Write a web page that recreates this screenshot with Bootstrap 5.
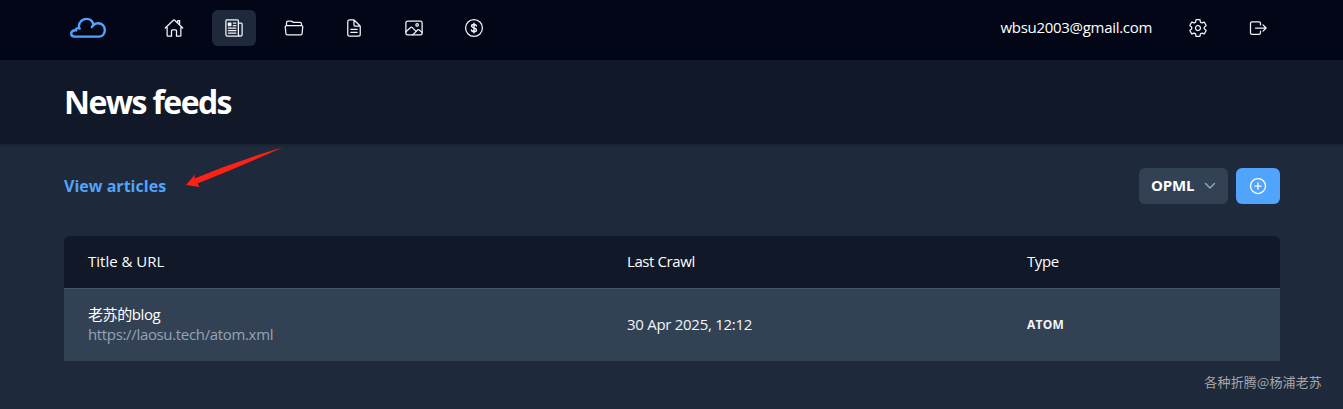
<!DOCTYPE html>
<html lang="en">
<head>
<meta charset="utf-8">
<meta name="viewport" content="width=device-width, initial-scale=1">
<title>News feeds</title>
<link href="https://cdn.jsdelivr.net/npm/bootstrap@5.3.0/dist/css/bootstrap.min.css" rel="stylesheet">
<style>
body{background:#1e293b;color:#fff;font:15px/20px "Open Sans","Noto Sans CJK SC",sans-serif;min-height:409px;overflow:hidden}
.wrap{width:1216px;margin-left:64px}
.topbar{height:60px;background:#020617;padding-bottom:4px}
.ico{width:20px;height:20px;display:block;fill:none;stroke:currentColor;stroke-width:32;stroke-linecap:round;stroke-linejoin:round}
.tab{width:44px;height:36px;border-radius:6px;color:#f1f5f9}
.tab.active{background:#1e293b}
.brand{width:88px;padding-left:5px}
.mail{letter-spacing:-.3px;padding-bottom:2px}
.titlebar{height:84px;background:#111827;box-shadow:0 1px 3px rgba(0,0,0,.25)}
h1{font-size:32px;font-weight:700;line-height:36px;letter-spacing:-1.6px;padding-bottom:1px}
.view{color:#51a4fb;font-size:16px;font-weight:700;letter-spacing:.02px}
.opml{width:89px;height:36px;border-radius:6px;background:#334155;padding:0 12px;font-weight:700;letter-spacing:-.2px}
.opml span{padding-bottom:2px}
.add{width:44px;height:36px;border-radius:6px;background:#51a4fb}
.feeds{border-radius:6px 6px 0 0;overflow:hidden}
.feeds .cell{padding-left:24px}
.c1{width:539px}.c2{width:400px}
.head{height:52px;background:#111827;padding-bottom:2px}
.item{height:73px;background:#334155;border-top:1px solid #475569;padding-bottom:2px}
.name,.t2{letter-spacing:-.4px}
.url{color:#94a3b8;letter-spacing:-.34px}
.date{letter-spacing:-.28px}
.t3{letter-spacing:-.4px}
.soft{color:#f1f5f9}
.kind{font-size:12px;font-weight:700;letter-spacing:.2px}
.arrow{left:184px;top:146px}
.sign{right:21px;bottom:17px;font:13px/20px "Noto Sans CJK SC",sans-serif;color:#a5a9ad;letter-spacing:.15px}
</style>
</head>
<body class="position-relative">
<nav class="topbar d-flex align-items-center">
 <div class="wrap d-flex align-items-center">
  <a class="brand" href="#"><svg class="d-block" width="38" height="22" viewBox="0 0 38 22" fill="none" stroke="#51a4fb" stroke-width="2.4" stroke-linejoin="round" stroke-linecap="round"><path d="M5.500 19.600H29.500C33.700 19.600 35.800 16.500 35.800 12.900C35.800 9 32.900 6.200 29.400 6.200C27.300 6.200 25.800 6.800 24.500 8C23.800 4.400 21 1.900 17.500 1.900C13.500 1.900 10.200 4.700 10 8.800C9.900 9.800 10 10.400 10.100 11.300C8.300 10.800 6.800 11.700 6.400 13.200C3.700 13.200 2.200 14.800 2.200 16.600C2.200 18.300 3.500 19.600 5.500 19.600ZM24.500 8C23.700 8.700 23.200 9.400 22.900 10.200M10.100 11.300L10.800 11.600M6.400 13.200L7.200 13.400"/></svg></a>
  <div class="d-flex gap-3">
   <a class="tab d-flex align-items-center justify-content-center" href="#"><svg class="ico" viewBox="0 0 512 512"><path d="M80 212v236a16 16 0 0016 16h96V328a24 24 0 0124-24h80a24 24 0 0124 24v136h96a16 16 0 0016-16V212M480 256L266.89 52c-5-5.28-16.69-5.34-21.78 0L32 256M400 179V64h-48v69"/></svg></a>
   <a class="tab active d-flex align-items-center justify-content-center" href="#"><svg class="ico" viewBox="0 0 512 512"><path d="M368 415.86V72a24 24 0 00-24-24H72a24 24 0 00-24 24v352a40 40 0 0040 40h328M416 464a48 48 0 01-48-48V128h72a24 24 0 0124 24v264a48 48 0 01-48 48zM240 128h64M240 192h64M112 256h192M112 320h192M112 384h192"/><path fill="currentColor" stroke="none" d="M176 208h-64a16 16 0 01-16-16v-64a16 16 0 0116-16h64a16 16 0 0116 16v64a16 16 0 01-16 16z"/></svg></a>
   <a class="tab d-flex align-items-center justify-content-center" href="#"><svg class="ico" viewBox="0 0 512 512"><path d="M64 192v-72a40 40 0 0140-40h75.89a40 40 0 0122.19 6.72l27.84 18.56a40 40 0 0022.19 6.72H408a40 40 0 0140 40v40M479.9 226.55L463.68 392a40 40 0 01-39.93 40H88.25a40 40 0 01-39.93-40L32.1 226.55A32 32 0 0164 192h384.1a32 32 0 0131.8 34.55z"/></svg></a>
   <a class="tab d-flex align-items-center justify-content-center" href="#"><svg class="ico" viewBox="0 0 512 512"><path d="M416 221.25V416a48 48 0 01-48 48H144a48 48 0 01-48-48V96a48 48 0 0148-48h98.75a32 32 0 0122.62 9.37l141.26 141.26a32 32 0 019.37 22.62zM256 56v120a32 32 0 0032 32h120M176 288h160M176 368h160"/></svg></a>
   <a class="tab d-flex align-items-center justify-content-center" href="#"><svg class="ico" viewBox="0 0 512 512"><rect x="48" y="80" width="416" height="352" rx="48"/><circle cx="336" cy="176" r="32"/><path d="M304 335.79l-90.66-90.49a32 32 0 00-43.87-1.3L48 352M224 432l123.34-123.34a32 32 0 0143.11-2L464 368"/></svg></a>
   <a class="tab d-flex align-items-center justify-content-center" href="#"><svg class="ico" viewBox="0 0 512 512"><circle cx="256" cy="256" r="216"/><path stroke-width="38" d="M318 202c-5-26-29-38-62-38s-62 14-62 43c0 65 126 32 126 98 0 28-26 43-64 43s-62-14-66-42M256 132v248"/></svg></a>
  </div>
  <div class="ms-auto d-flex align-items-center">
   <span class="mail">wbsu2003@gmail.com</span>
   <a class="tab d-flex align-items-center justify-content-center ms-4" href="#"><svg class="ico" viewBox="0 0 512 512"><path d="M262.29 192.31a64 64 0 1057.4 57.4 64.13 64.13 0 00-57.4-57.4zM416.39 256a154.34 154.34 0 01-1.53 20.79l45.21 35.46a10.81 10.81 0 012.45 13.75l-42.77 74a10.81 10.81 0 01-13.14 4.59l-44.9-18.08a16.11 16.11 0 00-15.17 1.75A164.48 164.48 0 01325 400.8a15.94 15.94 0 00-8.82 12.14l-6.73 47.89a11.08 11.08 0 01-10.68 9.17h-85.54a11.11 11.11 0 01-10.69-8.87l-6.72-47.82a16.07 16.07 0 00-9-12.22 155.3 155.3 0 01-21.46-12.57 16 16 0 00-15.11-1.71l-44.89 18.07a10.81 10.81 0 01-13.14-4.58l-42.77-74a10.8 10.8 0 012.45-13.75l38.21-30a16.05 16.05 0 006-14.08c-.36-4.17-.58-8.33-.58-12.5s.21-8.27.58-12.35a16 16 0 00-6.07-13.94l-38.19-30A10.81 10.81 0 0149.48 186l42.77-74a10.81 10.81 0 0113.14-4.59l44.9 18.08a16.11 16.11 0 0015.17-1.75A164.48 164.48 0 01187 111.2a15.94 15.94 0 008.82-12.14l6.73-47.89A11.08 11.08 0 01213.23 42h85.54a11.11 11.11 0 0110.69 8.87l6.72 47.82a16.07 16.07 0 009 12.22 155.3 155.3 0 0121.46 12.57 16 16 0 0015.11 1.71l44.89-18.07a10.81 10.81 0 0113.14 4.58l42.77 74a10.8 10.8 0 01-2.45 13.75l-38.21 30a16.05 16.05 0 00-6.05 14.08c.33 4.14.55 8.3.55 12.47z"/></svg></a>
   <a class="tab d-flex align-items-center justify-content-center ms-3" href="#"><svg class="ico" viewBox="0 0 512 512"><path d="M320 336v40a40 40 0 01-40 40H104a40 40 0 01-40-40V136a40 40 0 0140-40h176a40 40 0 0140 40v40M384 176l80 80-80 80M192 256h264"/></svg></a>
  </div>
 </div>
</nav>
<header class="titlebar d-flex align-items-center"><div class="wrap"><h1 class="m-0">News feeds</h1></div></header>
<main class="wrap pt-4">
 <div class="d-flex align-items-center justify-content-between">
  <a class="view text-decoration-none" href="#"><span>View articles</span></a>
  <div class="d-flex gap-2">
   <div class="opml d-flex align-items-center justify-content-between"><span>OPML</span><svg width="12" height="8" viewBox="0 0 12 8" fill="none" stroke="#94a3b8" stroke-width="1.5" stroke-linecap="round" stroke-linejoin="round"><path d="M1.5 1.5L6 6L10.500 1.500"/></svg></div>
   <div class="add d-flex align-items-center justify-content-center"><svg class="ico" viewBox="0 0 512 512"><circle cx="256" cy="256" r="192"/><path d="M256 176v160M336 256H176"/></svg></div>
  </div>
 </div>
 <div class="feeds mt-4 pt-2"><div class="feeds">
  <div class="head d-flex align-items-center"><div class="cell c1"><span class="t1">Title &amp; URL</span></div><div class="cell c2"><span class="t2">Last Crawl</span></div><div class="cell"><span class="t3">Type</span></div></div>
  <div class="item d-flex align-items-center"><div class="cell c1"><div><span class="name">老苏的blog</span></div><div><span class="url">https://laosu.tech/atom.xml</span></div></div><div class="cell c2 soft"><span class="date">30 Apr 2025, 12:12</span></div><div class="cell soft"><span class="kind">ATOM</span></div></div>
 </div></div>
</main>
<svg class="arrow position-absolute" width="100" height="44" viewBox="0 0 100 44"><path fill="#ff2116" d="M2 39L11 28.500L10.500 32.500Q52 15 98.500 1.500Q54 21.500 13.500 37.500L15.500 41Z"/></svg>
<div class="sign position-absolute"><span>各种折腾@杨浦老苏</span></div>
</body>
</html>
